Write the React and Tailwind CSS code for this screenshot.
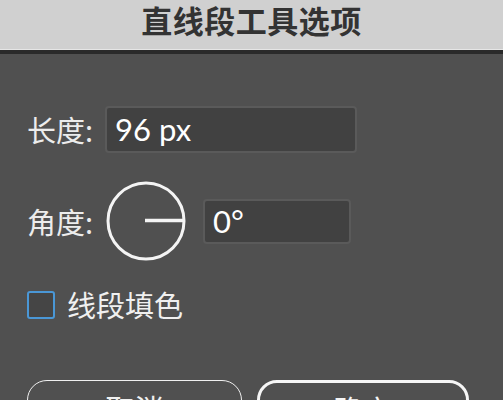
import React from "react";

const CJK = { fontFamily: '"Noto Sans CJK SC", "Noto Sans", sans-serif' };

function AngleDial() {
  return (
    <svg width="82" height="82" viewBox="0 0 82 82" className="shrink-0">
      <circle cx="41" cy="41" r="38" fill="none" stroke="#f4f4f4" strokeWidth="3" />
      <line x1="40" y1="40.5" x2="78" y2="40.5" stroke="#f4f4f4" strokeWidth="3.5" />
    </svg>
  );
}

export default function App() {
  return (
    <div
      className="w-[503px] h-[400px] overflow-hidden bg-[#505050] flex flex-col"
      style={CJK}
    >
      <div className="h-[50px] shrink-0 bg-[#d0d0d0] flex justify-center items-start pt-[1px] border-b border-[#e6e6e6]">
        <span className="text-[31px] font-bold text-[#333333] leading-[38px] tracking-[0.5px]">
          直线段工具选项
        </span>
      </div>
      <div className="h-[4px] shrink-0 bg-[#2a2a2a]" />

      <div className="flex flex-col px-[27px]">
        <div className="flex items-center mt-[52px] gap-[8px]">
          <span className="text-[29px] text-[#ececec] leading-none w-[70px]">长度:</span>
          <div className="w-[252px] h-[47px] rounded-[4px] bg-[#414141] border-2 border-[#5a5a5a] flex items-center px-[8px]">
            <span className="text-[31px] text-white leading-none" style={{ fontFamily: "Lato, sans-serif" }}>
              96 px
            </span>
          </div>
        </div>

        <div className="flex items-center mt-[27px]">
          <span className="text-[29px] text-[#ececec] leading-none w-[78px]">角度:</span>
          <AngleDial />
          <div className="ml-[16px] w-[148px] h-[45px] rounded-[4px] bg-[#414141] border-2 border-[#5a5a5a] flex items-center px-[8px]">
            <span className="text-[31px] text-white leading-none" style={{ fontFamily: "Lato, sans-serif" }}>
              0°
            </span>
          </div>
        </div>

        <div className="flex items-center mt-[28px] gap-[12px]">
          <div className="w-[28px] h-[28px] rounded-[3px] border-[2.5px] border-[#4a97d6] bg-[#454545]" />
          <span className="text-[29px] text-[#f0f0f0] leading-none">线段填色</span>
        </div>

        <div className="flex mt-[61px] gap-[15px]">
          <div className="w-[215px] h-[52px] rounded-[20px] border-[1.5px] border-[#f0f0f0] flex justify-center pt-[13px]">
            <span className="text-[29px] text-[#f0f0f0] leading-none">取消</span>
          </div>
          <div className="w-[212px] h-[52px] rounded-[20px] border-[3px] border-[#f6f6f6] flex justify-center pt-[12px]">
            <span className="text-[29px] text-[#f6f6f6] leading-none">确定</span>
          </div>
        </div>
      </div>
    </div>
  );
}
